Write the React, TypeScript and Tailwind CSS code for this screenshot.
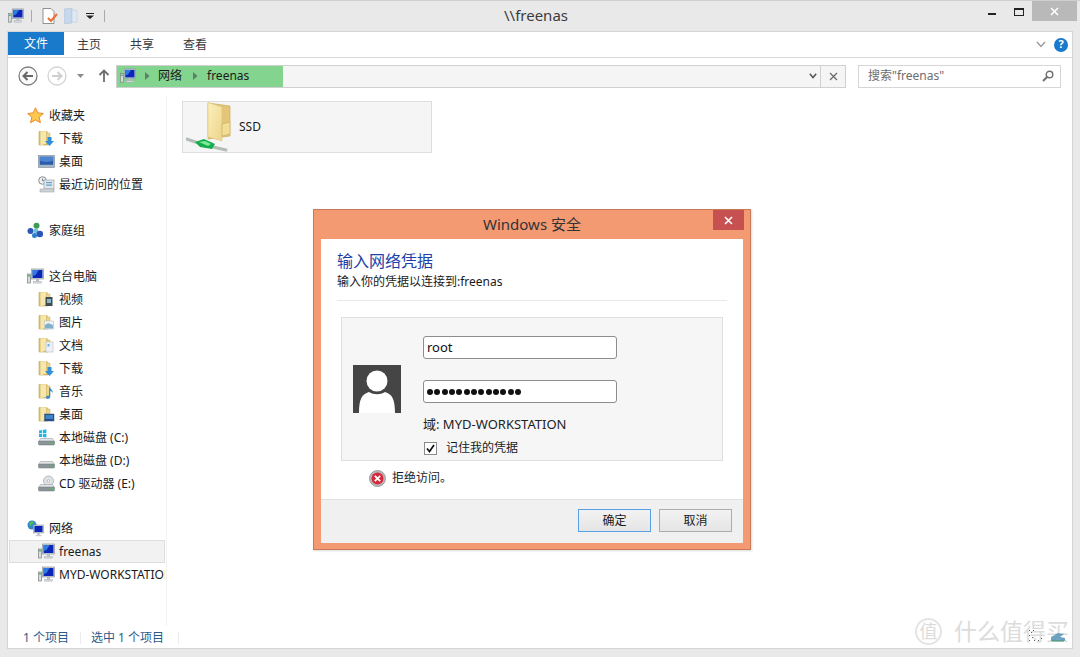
import React from "react";

function Pc({ s = 17 }: { s?: number }) {
  return (
    <svg width={s} height={s} viewBox="0 0 17 17" className="shrink-0">
      <rect x="0.5" y="6" width="3" height="9" fill="#d8dde0" stroke="#77807f" strokeWidth="0.7" />
      <rect x="1.2" y="7" width="1.6" height="1.5" fill="#34b04a" />
      <rect x="4.5" y="1" width="12" height="10" fill="#c9cfd6" stroke="#8f98a2" strokeWidth="0.7" />
      <rect x="5.6" y="2" width="9.8" height="8" fill="#0b25b8" />
      <path d="M5.6 2h6l-3 5-3 1z" fill="#2f7be0" />
      <rect x="9" y="11" width="3" height="2.5" fill="#b6bcc2" />
      <rect x="6.5" y="13.5" width="8" height="1.6" fill="#d5d9dc" stroke="#9aa1a8" strokeWidth="0.4" />
    </svg>
  );
}

function Folder({ children }: { children?: React.ReactNode }) {
  return (
    <svg width="17" height="17" viewBox="0 0 17 17" className="shrink-0">
      <path d="M1 1.500h8l1 2v11.500H1z" fill="#dcbf6c" stroke="#c2a554" strokeWidth="0.6" />
      <path d="M2.500 1.200l6 0v12l-6 2.300z" fill="#f6e7ae" />
      <path d="M8.500 3h3.500v10h-3.500z" fill="#ecd68d" stroke="#c9ac5c" strokeWidth="0.5" />
      {children}
    </svg>
  );
}

const overlays: Record<string, React.ReactNode> = {
  down: <path d="M9.500 7h4v4h2.500l-4.500 5-4.500-5h2.500z" fill="#2f8fdc" />,
  video: (
    <g>
      <rect x="7.500" y="6" width="7" height="9" fill="#3d4d55" />
      <rect x="9" y="8" width="4" height="4" fill="#8fb3c5" />
    </g>
  ),
  pic: (
    <g>
      <rect x="6.500" y="7" width="9" height="8" fill="#f3f5f6" stroke="#aab3b8" strokeWidth="0.5" />
      <path d="M7 11l3-2 5 2v3.500H7z" fill="#7fb0c9" />
    </g>
  ),
  doc: (
    <g>
      <rect x="8" y="5" width="7" height="10" fill="#eef2f6" stroke="#a9b3bc" strokeWidth="0.5" />
      <rect x="9.500" y="7" width="2" height="2.500" fill="#6fb0e0" />
    </g>
  ),
  music: (
    <path d="M11 4.500h1.200c.3 2 2.800 2.500 2.800 5.500-.8-1.200-1.800-1.800-2.800-2V14c0 1.300-1.300 2-2.700 2C9 16 8 15.300 8 14.300s1.300-1.800 3-1.500z" fill="#2f8fdc" />
  ),
  desk: (
    <g>
      <rect x="6.500" y="8" width="9.500" height="7" fill="#1f4f8f" stroke="#41586e" strokeWidth="0.5" />
      <rect x="7.500" y="9" width="7.500" height="4" fill="#3f83c9" />
    </g>
  ),
};

function Desk() {
  return (
    <svg width="17" height="17" viewBox="0 0 17 17" className="shrink-0">
      <rect x="0.500" y="2.500" width="16" height="12" fill="#a8b6c6" stroke="#7e8b9a" strokeWidth="0.6" />
      <rect x="1.800" y="3.800" width="13.400" height="8" fill="#2b5cab" />
      <path d="M1.800 3.800h13.400v4c-4 1.500-9 1.500-13.400 0z" fill="#4c84cf" />
    </svg>
  );
}

function Recent() {
  return (
    <svg width="17" height="17" viewBox="0 0 17 17" className="shrink-0">
      <circle cx="4.500" cy="4.500" r="3.800" fill="#eef0f1" stroke="#6d7479" strokeWidth="0.8" />
      <path d="M4.500 2.500v2.200h2" stroke="#555" strokeWidth="0.7" fill="none" />
      <rect x="6" y="4" width="10" height="9" fill="#e2e6e9" stroke="#8d959b" strokeWidth="0.6" />
      <rect x="8" y="6" width="6" height="1.200" fill="#5fa0d0" />
      <rect x="8" y="8.500" width="6" height="1.200" fill="#5fa0d0" />
      <rect x="2" y="13" width="14" height="3" fill="#cfd4d8" stroke="#92999f" strokeWidth="0.5" />
    </svg>
  );
}

function Star() {
  return (
    <svg width="17" height="17" viewBox="0 0 17 17" className="shrink-0">
      <path d="M8.500 0.800l2.300 5.100 5.500.6-4.100 3.700 1.200 5.500-4.900-2.800-4.900 2.800 1.200-5.500L.7 6.500l5.500-.6z" fill="#fcc94e" stroke="#e98a2a" strokeWidth="1" />
    </svg>
  );
}

function Home() {
  return (
    <svg width="17" height="17" viewBox="0 0 17 17" className="shrink-0">
      <circle cx="9.500" cy="3.800" r="3" fill="#3f9b53" />
      <circle cx="3.500" cy="9" r="3" fill="#2b56b8" />
      <circle cx="9" cy="9" r="2.400" fill="#6fc1e0" />
      <circle cx="12.800" cy="12" r="3.300" fill="#2b56b8" />
      <circle cx="7.500" cy="13.500" r="2.500" fill="#2e7ec8" />
    </svg>
  );
}

function Drive({ kind }: { kind: "c" | "d" | "e" }) {
  return (
    <svg width="17" height="17" viewBox="0 0 17 17" className="shrink-0">
      {kind === "c" && (
        <g fill="#22b5e8">
          <path d="M1 1.500l3-.5v3.300H1z" />
          <path d="M4.800 0.900l3.600-.6v4H4.800z" />
          <path d="M1 5h3v3H1z" />
          <path d="M4.800 5h3.600v3.500l-3.600-.4z" />
        </g>
      )}
      {kind === "e" && (
        <g>
          <circle cx="10.500" cy="6" r="5" fill="#dfe3e6" stroke="#8e959b" strokeWidth="0.6" />
          <circle cx="10.500" cy="6" r="1.300" fill="#fff" stroke="#8e959b" strokeWidth="0.5" />
        </g>
      )}
      <path d="M2.500 9.500h12l2 3H.5z" fill="#e3e6e8" stroke="#8b9399" strokeWidth="0.5" />
      <rect x="0.500" y="12" width="16" height="4" rx="1" fill="#8b9499" stroke="#6e767b" strokeWidth="0.5" />
      <rect x="12.500" y="13.200" width="2.500" height="1.300" fill="#4bc04f" />
    </svg>
  );
}

function Net() {
  return (
    <svg width="17" height="17" viewBox="0 0 17 17" className="shrink-0">
      <circle cx="5" cy="5" r="4.500" fill="#2f86c9" />
      <path d="M2 3c1.500-2 4-2 5-1 0 2-2 1.500-2.500 3S2 6.500 2 3z" fill="#54b65a" />
      <rect x="6.500" y="5" width="10" height="8" fill="#c8ced4" stroke="#8f98a2" strokeWidth="0.6" />
      <rect x="7.500" y="6" width="8" height="6" fill="#0b25b8" />
      <rect x="10.500" y="13" width="2" height="2" fill="#aeb4ba" />
      <rect x="8.500" y="15" width="6" height="1.200" fill="#c6cbd0" />
    </svg>
  );
}

type Row = { label: string; icon: React.ReactNode; lv?: number; gap?: boolean; tight?: boolean; sel?: boolean };

const rows: Row[] = [
  { label: "收藏夹", icon: <Star /> },
  { label: "下载", lv: 1, icon: <Folder>{overlays.down}</Folder> },
  { label: "桌面", lv: 1, icon: <Desk /> },
  { label: "最近访问的位置", lv: 1, icon: <Recent /> },
  { label: "家庭组", gap: true, icon: <Home /> },
  { label: "这台电脑", gap: true, icon: <Pc /> },
  { label: "视频", lv: 1, icon: <Folder>{overlays.video}</Folder> },
  { label: "图片", lv: 1, icon: <Folder>{overlays.pic}</Folder> },
  { label: "文档", lv: 1, icon: <Folder>{overlays.doc}</Folder> },
  { label: "下载", lv: 1, icon: <Folder>{overlays.down}</Folder> },
  { label: "音乐", lv: 1, icon: <Folder>{overlays.music}</Folder> },
  { label: "桌面", lv: 1, icon: <Folder>{overlays.desk}</Folder> },
  { label: "本地磁盘 (C:)", lv: 1, icon: <Drive kind="c" /> },
  { label: "本地磁盘 (D:)", lv: 1, icon: <Drive kind="d" /> },
  { label: "CD 驱动器 (E:)", lv: 1, icon: <Drive kind="e" /> },
  { label: "网络", tight: true, icon: <Net /> },
  { label: "freenas", lv: 1, sel: true, icon: <Pc /> },
  { label: "MYD-WORKSTATION", lv: 1, icon: <Pc /> },
];

function Sidebar() {
  return (
    <div className="w-[159px] shrink-0 border-r border-[#f2f2f2] pt-[8px] text-[12px] text-[#1a1a1a]">
      <div className="w-[157px] overflow-hidden">
        {rows.map((r, i) => (
          <div
            key={i}
            className={`flex h-[23px] items-center whitespace-nowrap border ${r.gap ? "mt-[23px]" : ""} ${r.tight ? "mt-[22px]" : ""} ${
              r.sel ? "ml-[1px] w-[156px] border-[#dedede] bg-[#f2f2f2]" : "border-transparent"
            } ${r.lv ? (r.sel ? "gap-[4px] pl-[28px]" : "gap-[4px] pl-[29px]") : "gap-[5px] pl-[18px]"}`}
          >
            {r.icon}
            <span>{r.label}</span>
          </div>
        ))}
      </div>
    </div>
  );
}

function AddressBar() {
  return (
    <div className="flex h-[38px] shrink-0 items-center pb-[2px]">
      <div className="ml-[10px] flex w-[98px] shrink-0 items-center">
        <svg width="20" height="20" viewBox="0 0 20 20" className="shrink-0">
          <circle cx="10" cy="10" r="9" fill="#fafafa" stroke="#7f7f7f" strokeWidth="1.300" />
          <path d="M15 10H6M9.500 6L5.500 10l4 4" fill="none" stroke="#666" strokeWidth="2" />
        </svg>
        <svg width="20" height="20" viewBox="0 0 20 20" className="ml-[9px] shrink-0">
          <circle cx="10" cy="10" r="9" fill="#fff" stroke="#d4d4d4" strokeWidth="1.300" />
          <path d="M5 10h9M10.500 6l4 4-4 4" fill="none" stroke="#cfcfcf" strokeWidth="2" />
        </svg>
        <svg width="8" height="5" viewBox="0 0 8 5" className="ml-[10px] shrink-0">
          <path d="M0 0h7L3.500 4z" fill="#8a8a8a" />
        </svg>
        <svg width="12" height="14" viewBox="0 0 12 14" className="ml-[13px] shrink-0">
          <path d="M6 13V2M1.500 6L6 1.500 10.500 6" fill="none" stroke="#6d6d6d" strokeWidth="1.800" />
        </svg>
      </div>
      <div className="flex h-[23px] w-[730px] shrink-0 items-stretch border border-[#d0d0d0] bg-[#f5f5f5]">
        <div className="flex w-[166px] shrink-0 items-center gap-[9px] bg-[#82d48e] pl-[3px] text-[12px] text-[#1c1c1c]">
          <Pc s={16} />
          <svg width="5" height="8" viewBox="0 0 5 8" className="shrink-0"><path d="M0 0l4.500 4L0 8z" fill="#5f7f66" /></svg>
          <span className="-ml-[1px]">网络</span>
          <svg width="5" height="8" viewBox="0 0 5 8" className="ml-[2px] shrink-0"><path d="M0 0l4.500 4L0 8z" fill="#5f7f66" /></svg>
          <span className="ml-0">freenas</span>
        </div>
        <div className="flex-1" />
        <div className="flex w-[15px] items-center justify-center border-r border-[#d0d0d0]">
          <svg width="8" height="6" viewBox="0 0 8 6"><path d="M.8.800L4 4.500 7.200.800" fill="none" stroke="#555" strokeWidth="1.500" /></svg>
        </div>
        <div className="flex w-[24px] items-center justify-center">
          <svg width="9" height="9" viewBox="0 0 9 9"><path d="M1 1l7 7M8 1L1 8" stroke="#6a6a6a" strokeWidth="1.300" /></svg>
        </div>
      </div>
      <div className="ml-[12px] flex h-[23px] w-[203px] shrink-0 items-center justify-between border border-[#d6d6d6] bg-white pl-[9px] pr-[6px] text-[12px] text-[#6d6d6d]">
        <span>搜索"freenas"</span>
        <svg width="12" height="12" viewBox="0 0 12 12">
          <circle cx="7.500" cy="4.500" r="3.300" fill="none" stroke="#6f6f6f" strokeWidth="1.400" />
          <path d="M5 7l-4 4" stroke="#6f6f6f" strokeWidth="2" />
        </svg>
      </div>
    </div>
  );
}

function ShareFolder() {
  return (
    <svg width="46" height="50" viewBox="0 0 46 50" className="shrink-0">
      <defs>
        <linearGradient id="ff" x1="0" y1="0" x2="1" y2="1">
          <stop offset="0" stopColor="#fbf0bd" />
          <stop offset="1" stopColor="#eed48a" />
        </linearGradient>
      </defs>
      <path d="M22 1l22 3v30l-22 3z" fill="#e3c678" stroke="#ccae5e" strokeWidth="0.700" />
      <path d="M22 0.500l14 4.500v34l-14-4z" fill="url(#ff)" stroke="#d9bf72" strokeWidth="0.500" />
      <path d="M36 22l8-2v12l-8 2z" fill="#f2dd95" stroke="#bda35a" strokeWidth="0.500" />
      <path d="M0.500 37l12 4" stroke="#b3bdb6" strokeWidth="3" strokeLinecap="round" />
      <path d="M27 45l13 3" stroke="#b3bdb6" strokeWidth="3" strokeLinecap="round" />
      <path d="M9 40l9-3 11 5-3 5-12-2z" fill="#14ad4c" />
      <path d="M13 40l6-1 6 3-3 2z" fill="#7ce89b" />
    </svg>
  );
}

function Dialog() {
  return (
    <div className="absolute left-[313px] top-[208px] flex h-[341px] w-[438px] flex-col border border-[#c67a5a] bg-[#f39a73] px-[7px] pb-[6px] shadow-[1px_1px_2px_rgba(0,0,0,0.15)]">
      <div className="relative flex h-[29px] shrink-0 items-center justify-center text-[15px] text-[#333]">
        Windows 安全
        <div className="absolute right-[-1px] top-0 flex h-[20px] w-[31px] items-center justify-center bg-[#c75050]">
          <svg width="9" height="9" viewBox="0 0 9 9"><path d="M1 1l7 7M8 1L1 8" stroke="#fff" strokeWidth="1.600" /></svg>
        </div>
      </div>
      <div className="flex flex-1 flex-col bg-white">
        <div className="flex-1 pl-[16px] pr-[16px] pt-[12px]">
          <div className="text-[16px] leading-[20px] text-[#1c3fa8]">输入网络凭据</div>
          <div className="mt-[1px] text-[12px] leading-[20px] text-[#1a1a1a]">输入你的凭据以连接到:freenas</div>
          <div className="mt-[8px] h-[1px] bg-[#e8e8e8]" />
          <div className="ml-[4px] mr-[4px] mt-[16px] flex h-[144px] w-[382px] border border-[#dedede] bg-[#f6f6f6]">
            <svg width="48" height="48" viewBox="0 0 48 48" className="ml-[11px] mt-[47px] shrink-0">
              <rect width="48" height="48" fill="#454545" />
              <circle cx="24" cy="16" r="10.500" fill="#fff" />
              <path d="M6 48c0-14 3-19 10-21 5 3 11 3 16 0 7 2 10 7 10 21z" fill="#fff" />
            </svg>
            <div className="ml-[22px] flex w-[194px] flex-col pt-[18px] text-[12px]">
              <div className="flex h-[23px] items-center rounded-[3px] border border-[#8d8d8d] bg-white pl-[3px] text-[13px] text-[#111]">root</div>
              <div className="mt-[21px] flex h-[23px] items-center rounded-[3px] border border-[#8d8d8d] bg-white pl-[3px]">
                <div className="flex gap-[1.330px]">
                  {Array.from({ length: 13 }).map((_, i) => (
                    <span key={i} className="h-[6px] w-[6px] rounded-full bg-[#111]" />
                  ))}
                </div>
              </div>
              <div className="mt-[12px] h-[18px] whitespace-nowrap text-[13px] leading-[18px] text-[#222]">域: MYD-WORKSTATION</div>
              <div className="mt-[6px] flex items-center">
                <div className="ml-[1px] flex h-[13px] w-[13px] items-center justify-center border border-[#8b8b8b] bg-white">
                  <svg width="9" height="9" viewBox="0 0 9 9"><path d="M1 4.500L3.500 7.500 8 1" fill="none" stroke="#111" strokeWidth="1.700" /></svg>
                </div>
                <span className="ml-[9px] text-[12px] text-[#1a1a1a]">记住我的凭据</span>
              </div>
            </div>
          </div>
          <div className="ml-[32px] mt-[8px] flex items-center gap-[6px] text-[12px] text-[#1a1a1a]">
            <svg width="17" height="17" viewBox="0 0 17 17" className="shrink-0">
              <circle cx="8.500" cy="8.500" r="8" fill="#b9b9b9" stroke="#8e8e8e" strokeWidth="0.800" />
              <circle cx="8.500" cy="8.500" r="6" fill="#d8283c" />
              <path d="M5.800 5.800l5.400 5.400M11.200 5.800l-5.400 5.400" stroke="#fff" strokeWidth="1.800" />
            </svg>
            <span>拒绝访问。</span>
          </div>
        </div>
        <div className="flex h-[44px] shrink-0 items-start justify-end gap-[8px] border-t border-[#e2e2e2] bg-[#f0f0f0] pr-[11px] pt-[9px] text-[12px] text-[#1a1a1a]">
          <div className="flex h-[23px] w-[73px] items-center justify-center border border-[#56a0e6] bg-gradient-to-b from-[#f2f2f2] to-[#e5e5e5]">确定</div>
          <div className="flex h-[23px] w-[73px] items-center justify-center border border-[#acacac] bg-gradient-to-b from-[#f2f2f2] to-[#e5e5e5]">取消</div>
        </div>
      </div>
    </div>
  );
}

export default function App() {
  return (
    <div
      className="relative flex h-[657px] w-[1080px] flex-col overflow-hidden border-t border-[#cfcfcf] bg-[#e9e9e9]"
      style={{ fontFamily: '"Noto Sans", "Noto Sans CJK SC", sans-serif' }}
    >
      <div className="flex h-[30px] shrink-0 items-start">
        <div className="ml-[8px] mt-[7px] flex w-[96px] shrink-0 items-center">
          <Pc s={16} />
          <div className="ml-[7px] h-[12px] w-[1px] bg-[#a9a9a9]" />
          <svg width="16" height="16" viewBox="0 0 16 16" className="ml-[10px] shrink-0">
            <path d="M1 .5h8l3 3V15.500H1z" fill="#fff" stroke="#777" strokeWidth="0.800" />
            <path d="M6 10l3 3 6-7" fill="none" stroke="#e8703a" strokeWidth="2.200" />
          </svg>
          <svg width="14" height="16" viewBox="0 0 14 16" className="ml-[6px] shrink-0">
            <path d="M0 1l8-1v15l-8 1z" fill="#c8d8ec" stroke="#a8bdd6" strokeWidth="0.500" />
            <path d="M8 2h5v12H8z" fill="#dfe8f3" stroke="#b5c6da" strokeWidth="0.500" />
          </svg>
          <svg width="8" height="6" viewBox="0 0 8 6" className="ml-[8px] shrink-0">
            <path d="M0 0h8v1H0zM0 2.500h8L4 6z" fill="#222" />
          </svg>
          <div className="ml-[10px] h-[12px] w-[1px] bg-[#a9a9a9]" />
        </div>
        <div className="flex-1 pr-[16px] pt-[5px] text-center text-[15px] leading-[18px] text-[#3c3c3c]">\\freenas</div>
        <div className="flex w-[96px] shrink-0 items-start">
          <div className="ml-[4px] mt-[12px] h-[2px] w-[8px] bg-[#222]" />
          <div className="ml-[18px] mt-[7px] h-[8px] w-[10px] border border-t-2 border-[#222]" />
          <div className="ml-[8px] flex h-[20px] w-[45px] items-center justify-center bg-[#b9b9b9]">
            <svg width="9" height="9" viewBox="0 0 9 9"><path d="M1 1l7 7M8 1L1 8" stroke="#fff" strokeWidth="1.500" /></svg>
          </div>
        </div>
      </div>

      <div className="mx-[7px] mb-[8px] flex flex-1 flex-col border border-[#d5d5d5] bg-white">
        <div className="flex h-[26px] shrink-0 items-start border-b border-[#dadada] text-[12px] text-[#3a3a3a]">
          <div className="flex h-[23px] w-[56px] items-center justify-center bg-[#1979ca] text-white">文件</div>
          <div className="flex h-[25px] w-[53px] items-center pl-[13px]">主页</div>
          <div className="flex h-[25px] w-[53px] items-center pl-[13px]">共享</div>
          <div className="flex h-[25px] w-[53px] items-center pl-[13px]">查看</div>
          <div className="flex-1" />
          <div className="flex h-[25px] items-center gap-[8px] pr-[4px]">
            <svg width="10" height="7" viewBox="0 0 10 7"><path d="M1 1l4 4.500L9 1" fill="none" stroke="#9a9a9a" strokeWidth="1.400" /></svg>
            <div className="flex h-[14px] w-[14px] items-center justify-center rounded-full bg-[#1979ca] text-[11px] font-bold text-white">?</div>
          </div>
        </div>
        <AddressBar />
        <div className="flex min-h-0 flex-1">
          <Sidebar />
          <div className="pl-[15px] pt-[5px]">
            <div className="flex h-[52px] w-[250px] items-center border border-[#dedede] bg-[#f5f5f5] pl-[3px] text-[12px] text-[#1a1a1a]">
              <ShareFolder />
              <span className="ml-[7px]">SSD</span>
            </div>
          </div>
        </div>
        <div className="flex h-[22px] shrink-0 items-center pt-[2px] text-[12px] text-[#2c5a88]">
          <span className="w-[72px] pl-[15px]">1 个项目</span>
          <div className="h-[12px] w-[1px] bg-[#ececec]" />
          <span className="w-[97px] pl-[10px]">选中 1 个项目</span>
          <div className="h-[12px] w-[1px] bg-[#ececec]" />
        </div>
      </div>

      <Dialog />

      <div className="pointer-events-none absolute left-[915px] top-[617px] flex items-center text-[#dcdcdc]">
        <div className="flex h-[27px] w-[27px] items-center justify-center rounded-full border-2 border-[#e4e4e4] text-[18px]">值</div>
        <span className="ml-[12px] text-[23px] leading-[27px]">什么值得买</span>
        <svg width="38" height="14" viewBox="0 0 38 14" className="absolute left-[113px] top-[11px]">
          <g fill="#55606a">
            <rect x="1" y="1" width="1" height="1" />
            <rect x="3" y="3" width="1" height="1" />
            <rect x="5" y="1" width="1" height="1" />
            <rect x="1" y="6" width="1" height="1" />
            <rect x="4" y="8" width="1" height="1" />
            <rect x="1" y="11" width="1" height="1" />
            <rect x="6" y="11" width="1" height="1" />
            <rect x="10" y="11" width="1" height="1" />
            <rect x="13" y="9" width="1" height="1" />
          </g>
          <path d="M23 8l7-4 6 1-4 3 5 1v3H23z" fill="#4d8fb5" opacity="0.800" />
          <path d="M24 12h12" stroke="#4d9a72" strokeWidth="1.200" />
        </svg>
      </div>
    </div>
  );
}
